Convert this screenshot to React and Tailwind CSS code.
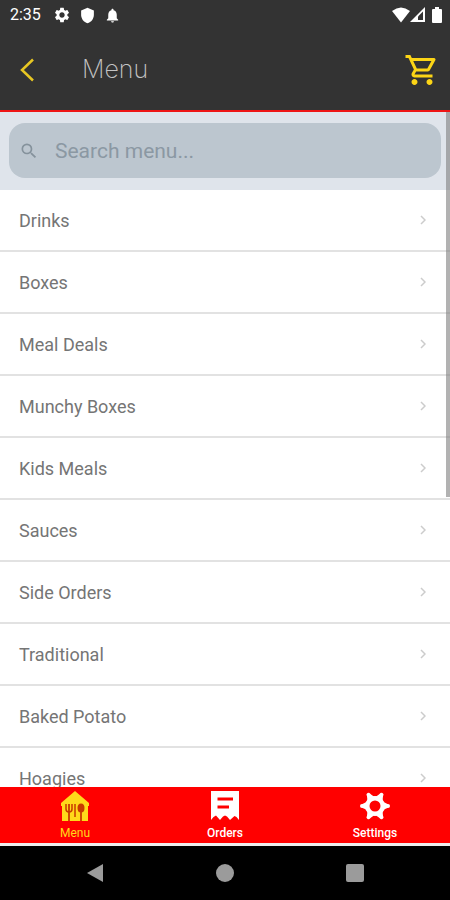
import React, { useState } from "react";
import {
  MdNotifications,
  MdOutlineShoppingCart,
  MdSearch,
  MdSettings,
  MdShield,
} from "react-icons/md";

const CATEGORIES = [
  "Drinks",
  "Boxes",
  "Meal Deals",
  "Munchy Boxes",
  "Kids Meals",
  "Sauces",
  "Side Orders",
  "Traditional",
  "Baked Potato",
  "Hoagies",
];

function MenuIcon() {
  return (
    <svg width="30" height="30" viewBox="0 0 30 30" aria-hidden="true">
      <path d="M15 0 L29 12 V15 H28 V30 H2 V15 H1 V12 Z" fill="currentColor" />
      <g stroke="#c93a00" fill="none">
        <path d="M6 13 V18 Q6 21 9 21 Q12 21 12 18 V13" strokeWidth="1.5" />
        <path d="M9 13 V30 M21 20 V30" strokeWidth="1.8" />
        <path d="M15 13 V26" strokeWidth="1.5" />
      </g>
      <ellipse cx="21" cy="17" rx="3.5" ry="4.5" fill="#c93a00" />
    </svg>
  );
}

function OrdersIcon() {
  return (
    <svg width="30" height="30" viewBox="0 0 30 30" aria-hidden="true">
      <path
        d="M1 0 H29 V29 L26.5 26 L24.5 25 L20 29 L17 25.5 L15 24.5 L13 25.5 L10 29 L6 24.5 L3.5 26 L1 29 Z"
        fill="currentColor"
      />
      <path d="M7.5 8 H23 M7.5 16 H19" stroke="#f00" strokeWidth="3" />
    </svg>
  );
}

function SettingsIcon() {
  return (
    <svg width="30" height="30" viewBox="0 0 30 30" aria-hidden="true">
      <g fill="currentColor">
        <circle cx="15" cy="15" r="10" />
        {[0, 60, 120, 180, 240, 300].map((angle) => (
          <g key={angle} transform={`rotate(${angle} 15 15)`}>
            <path d="M21 8.5 Q23.5 12 28 13.2 V16.8 Q23.5 18 21 21.5 Z" />
            <circle cx="28" cy="15" r="2" />
          </g>
        ))}
      </g>
      <circle cx="15" cy="15" r="5.5" fill="#f00" />
    </svg>
  );
}

const TABS = [
  { name: "Menu", Icon: MenuIcon },
  { name: "Orders", Icon: OrdersIcon },
  { name: "Settings", Icon: SettingsIcon },
];

function StatusBar() {
  return (
    <div className="flex h-[30px] shrink-0 items-center justify-between pr-2 pl-2.5 text-white">
      <div className="flex items-center gap-2">
        <span className="mr-1 text-base">2:35</span>
        <MdSettings size={18} />
        <MdShield size={17} />
        <MdNotifications size={17} />
      </div>
      <div className="flex items-center">
        <svg width="18" height="16" viewBox="0 0 18 16" aria-hidden="true">
          <path d="M0 4 Q9 -3 18 4 L9 15.5 Z" fill="currentColor" />
        </svg>
        <svg width="16" height="16" viewBox="0 0 16 16" aria-hidden="true">
          <path d="M0 15 L15 0 V15 Z" fill="currentColor" />
          <path d="M8 13 V9.5 L13 4.5 V13 Z" fill="#333" />
        </svg>
        <svg className="ml-1.5" width="10" height="16" viewBox="0 0 10 16" aria-hidden="true">
          <path
            d="M3 0 H7 V2 H9 Q10 2 10 3 V15 Q10 16 9 16 H1 Q0 16 0 15 V3 Q0 2 1 2 H3 Z"
            fill="currentColor"
          />
        </svg>
      </div>
    </div>
  );
}

function Header() {
  return (
    <header className="flex h-20 shrink-0 items-center pr-2.5 pl-5">
      <button type="button" aria-label="Back" className="text-[#e8c723]">
        <svg width="14" height="24" viewBox="0 0 14 24" fill="none" aria-hidden="true">
          <path d="M13 1.5 L2 12 L13 22.5" stroke="currentColor" strokeWidth="2.5" />
        </svg>
      </button>
      <h1 className="ml-12 flex-1 font-[Inter,sans-serif] text-[25px] font-extralight text-[#c4c4c4]">
        Menu
      </h1>
      <button type="button" aria-label="Cart" className="text-[#fcd516]">
        <MdOutlineShoppingCart size={36} />
      </button>
    </header>
  );
}

export default function App() {
  const [query, setQuery] = useState("");
  const [activeTab, setActiveTab] = useState("Menu");

  const visible = CATEGORIES.filter((name) =>
    name.toLowerCase().includes(query.toLowerCase()),
  );

  return (
    <div className="flex h-screen flex-col bg-[#333333] font-[Roboto,sans-serif]">
      <StatusBar />
      <Header />

      <main className="relative min-h-0 flex-1 overflow-hidden border-t-2 border-[#ee1515] bg-white">
        <div className="bg-[#dfe4eb] px-[9px] pt-[11px] pb-3">
          <label className="flex h-[55px] items-center gap-4 rounded-2xl bg-[#bcc6cf] px-2.5 text-[#85929c]">
            <MdSearch size={20} aria-hidden="true" />
            <input
              type="text"
              aria-label="Search menu"
              placeholder="Search menu..."
              value={query}
              onChange={(e) => setQuery(e.target.value)}
              className="min-w-0 flex-1 bg-transparent pt-0.5 text-[21px] outline-none placeholder:text-[#8b98a3]"
            />
          </label>
        </div>

        <ul>
          {visible.map((name) => (
            <li key={name}>
              <a
                href="#"
                className="flex h-[62px] items-center justify-between border-b-2 border-[#e2e2e2] pr-6 pl-[19px] text-lg text-[#757575]"
              >
                <span className="pt-0.5">{name}</span>
                <svg width="6" height="10" viewBox="0 0 6 10" fill="none" aria-hidden="true">
                  <path d="M1 1 L5 5 L1 9" stroke="#cccccc" strokeWidth="1.5" />
                </svg>
              </a>
            </li>
          ))}
        </ul>

        <div className="absolute top-0 right-0 h-[57%] w-1 bg-[#7f7f7f]/60" />
      </main>

      <nav className="flex h-[59px] shrink-0 border-b-3 border-[#eeeeee] bg-[#ff0000]">
        {TABS.map(({ name, Icon }) => (
          <button
            key={name}
            type="button"
            onClick={() => setActiveTab(name)}
            className={
              activeTab === name
                ? "flex flex-1 flex-col items-center pt-1 text-xs text-[#ffd91a]"
                : "flex flex-1 flex-col items-center pt-1 text-xs font-medium text-white"
            }
          >
            <Icon />
            <span className="mt-1">{name}</span>
          </button>
        ))}
      </nav>

      <div className="flex h-[54px] shrink-0 items-center justify-around bg-black px-[30px] text-[#9b9b9b]">
        <button type="button" aria-label="System back">
          <svg width="18" height="20" viewBox="0 0 18 20" aria-hidden="true">
            <path d="M1 10 L17 1 V19 Z" fill="currentColor" />
          </svg>
        </button>
        <button type="button" aria-label="Home" className="size-[18px] rounded-full bg-[#9b9b9b]" />
        <button type="button" aria-label="Recent apps" className="size-[18px] rounded-xs bg-[#9b9b9b]" />
      </div>
    </div>
  );
}
